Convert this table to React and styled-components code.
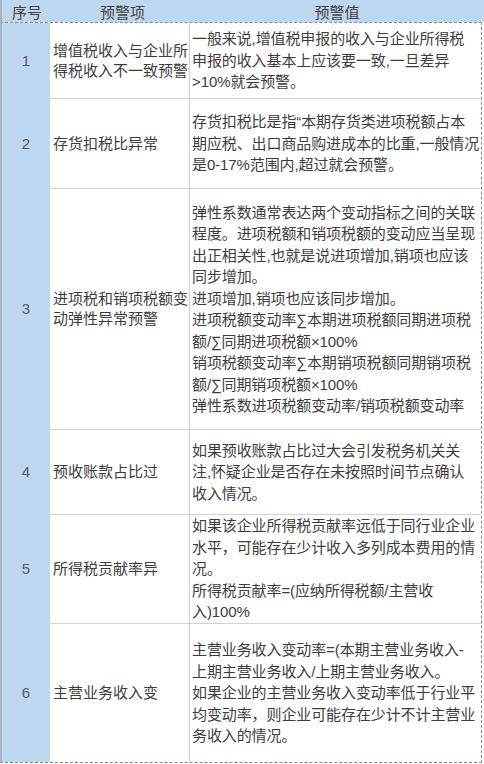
import styled, { createGlobalStyle } from "styled-components";

const GlobalStyle = createGlobalStyle`
  html, body {
    margin: 0;
    padding: 0;
    background: #ffffff;
  }
  body {
    font-family: "Liberation Sans", "Noto Sans CJK SC", sans-serif;
  }
`

const rows = [
    {
        no: "1",
        height: 76,
        item: ["增值税收入与企业所", "得税收入不一致预警"],
        value: ["一般来说,增值税申报的收入与企业所得税", "申报的收入基本上应该要一致,一旦差异", ">10%就会预警。"],
    },
    {
        no: "2",
        height: 90,
        item: ["存货扣税比异常"],
        value: ["存货扣税比是指“本期存货类进项税额占本", "期应税、出口商品购进成本的比重,一般情况", "是0-17%范围内,超过就会预警。"],
    },
    {
        no: "3",
        height: 241,
        item: ["进项税和销项税额变", "动弹性异常预警"],
        value: [
            "弹性系数通常表达两个变动指标之间的关联",
            "程度。进项税额和销项税额的变动应当呈现",
            "出正相关性,也就是说进项增加,销项也应该",
            "同步增加。",
            "进项增加,销项也应该同步增加。",
            "进项税额变动率∑本期进项税额同期进项税",
            "额/∑同期进项税额×100%",
            "销项税额变动率∑本期销项税额同期销项税",
            "额/∑同期销项税额×100%",
            "弹性系数进项税额变动率/销项税额变动率",
        ],
    },
    {
        no: "4",
        height: 85,
        item: ["预收账款占比过"],
        value: ["如果预收账款占比过大会引发税务机关关", "注,怀疑企业是否存在未按照时间节点确认", "收入情况。"],
    },
    {
        no: "5",
        height: 109,
        item: ["所得税贡献率异"],
        value: [
            "如果该企业所得税贡献率远低于同行业企业",
            "水平，可能存在少计收入多列成本费用的情",
            "况。",
            "所得税贡献率=(应纳所得税额/主营收",
            "入)100%",
        ],
    },
    {
        no: "6",
        height: 139,
        item: ["主营业务收入变"],
        value: [
            "主营业务收入变动率=(本期主营业务收入-",
            "上期主营业务收入/上期主营业务收入。",
            "如果企业的主营业务收入变动率低于行业平",
            "均变动率，则企业可能存在少计不计主营业",
            "务收入的情况。",
        ],
    },
];

const Page = styled.div`
  width: 484px;
  height: 764px;
  overflow: hidden;
`
const Header = styled.div`
  display: grid;
  grid-template-columns: 50px 141px 1fr;
  height: 22px;
  background: #bdd7ee;
  border-left: 2px solid #a9b4bf;
  box-sizing: border-box;
  width: 484px;
`
const HeadCell = styled.div`
  display: flex;
  align-items: center;
  justify-content: center;
  font-size: 15px;
  color: #444;
  padding-right: ${props => props.last ? "3px" : "0"};
`
const Body = styled.div`
  width: 482px;
  box-sizing: border-box;
  border-top: 1px dashed #7d8894;
  border-left: 2px solid #a9b4bf;
  border-right: 1px dashed #8a8a8a;
  border-bottom: 1px dashed #7d8894;
`
const Row = styled.div`
  display: grid;
  grid-template-columns: 48px 140px 1fr;
  height: ${props => props.h}px;
`
const NoCell = styled.div`
  background: #bdd7ee;
  display: flex;
  align-items: center;
  justify-content: center;
  font-size: 15px;
  color: #555e68;
`
const TextCell = styled.div`
  display: flex;
  flex-direction: column;
  justify-content: center;
  padding-left: ${props => props.wide ? "2px" : "3px"};
  border-top: ${props => props.first ? "none" : "1px solid #d2d2d2"};
  border-right: ${props => props.wide ? "none" : "1px solid #cfcfcf"};
  font-size: 15px;
  line-height: ${props => props.wide ? "21.5px" : "20px"};
  letter-spacing: ${props => props.wide ? "-0.1px" : "0"};
  color: #3d3d3d;
  overflow: hidden;
`
const Line = styled.div`
  white-space: nowrap;
`

function App() {
    return (
        <Page>
            <GlobalStyle />
            <Header>
                <HeadCell>序号</HeadCell>
                <HeadCell>预警项</HeadCell>
                <HeadCell last>预警值</HeadCell>
            </Header>
            <Body>
                {rows.map((r, i) => (
                    <Row key={r.no} h={i === 0 ? r.height - 1 : r.height}>
                        <NoCell>{r.no}</NoCell>
                        <TextCell first={i === 0}>
                            {r.item.map(t => <Line key={t}>{t}</Line>)}
                        </TextCell>
                        <TextCell first={i === 0} wide>
                            {r.value.map(t => <Line key={t}>{t}</Line>)}
                        </TextCell>
                    </Row>
                ))}
            </Body>
        </Page>
    )
}

export default App;
